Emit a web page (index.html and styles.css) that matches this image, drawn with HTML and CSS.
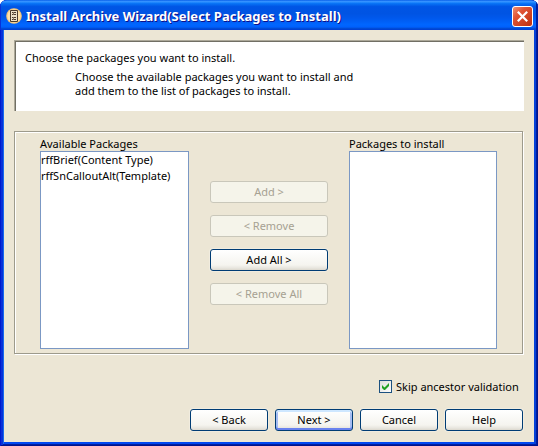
FILE: index.html
```
<!DOCTYPE html>
<html lang="en">
<head>
<meta charset="utf-8">
<title>Install Archive Wizard</title>
<link rel="stylesheet" href="styles.css">
</head>
<body>
<div class="window">
  <header class="titlebar">
    <svg class="app-icon" width="16" height="16" viewBox="0 0 16 16">
      <circle cx="8" cy="8" r="7.8" fill="#f5c67a"/>
      <circle cx="8" cy="8" r="6.6" fill="#ffe2ac"/>
      <path d="M4.5 2.5h7v11h-7z" fill="#efe2c8" stroke="#4d3c2c"/>
      <path d="M6 4.5h4M6 6.5h4M6 9.5h4M6 11.5h4" stroke="#4d3c2c"/>
      <path d="M7.5 4v3M7.5 9v3" stroke="#8c7860"/>
    </svg>
    <h1 class="title">Install Archive Wizard(Select Packages to Install)</h1>
    <button class="close" aria-label="Close">
      <svg width="21" height="21" viewBox="0 0 21 21">
        <defs><linearGradient id="red" x1="0" y1="0" x2="1" y2="1"><stop offset="0" stop-color="#ee9478"/><stop offset=".35" stop-color="#df5334"/><stop offset="1" stop-color="#bd2e0c"/></linearGradient></defs>
        <rect x=".5" y=".5" width="20" height="20" rx="2.5" fill="url(#red)" stroke="#fff"/>
        <path d="M5.8 5.8l9.4 9.4M15.2 5.8l-9.4 9.4" stroke="#fff" stroke-width="2.2"/>
      </svg>
    </button>
  </header>
  <main class="body">
    <section class="banner">
      <p class="lead">Choose the packages you want to install.</p>
      <p class="detail"><span class="d1">Choose the available packages you want to install and</span><br><span class="d2">add them to the list of packages to install.</span></p>
    </section>
    <section class="group">
      <div class="column">
        <div class="label"><span class="l1">Available Packages</span></div>
        <ul class="list">
          <li><span class="i1">rffBrief(Content Type)</span></li>
          <li><span class="i2">rffSnCalloutAlt(Template)</span></li>
        </ul>
      </div>
      <div class="transfer">
        <button class="btn" disabled>Add &gt;</button>
        <button class="btn" disabled>&lt; Remove</button>
        <button class="btn">Add All &gt;</button>
        <button class="btn" disabled>&lt; Remove All</button>
      </div>
      <div class="column">
        <div class="label"><span class="l2">Packages to install</span></div>
        <ul class="list narrow"></ul>
      </div>
    </section>
    <div class="option">
      <svg class="check" width="13" height="13" viewBox="0 0 13 13">
        <defs><linearGradient id="box" x1="0" y1="0" x2="1" y2="1"><stop offset="0" stop-color="#dcdcd7"/><stop offset="1" stop-color="#fff"/></linearGradient></defs>
        <rect x=".5" y=".5" width="12" height="12" fill="url(#box)" stroke="#1c5180"/>
        <path d="M3 5v3l2 2h1l4-4V3L5.500 7.500z" fill="#21a121"/>
      </svg>
      <span class="skip">Skip ancestor validation</span>
    </div>
    <footer class="actions">
      <button class="btn">&lt; Back</button>
      <button class="btn default">Next &gt;</button>
      <button class="btn">Cancel</button>
      <button class="btn">Help</button>
    </footer>
  </main>
</div>
</body>
</html>
```

FILE: styles.css
```
* { box-sizing: border-box; margin: 0; padding: 0; }
body { width: 538px; height: 446px; overflow: hidden; background: #fff; font: 11px/14px "Noto Sans", sans-serif; color: #000; }
.window {
  width: 538px; height: 446px; padding: 0 4px 4px; border-radius: 7px 7px 0 0; overflow: hidden;
  background: #0831d9;
  box-shadow: inset 1px 0 #0019cf, inset -1px 0 #00138c, inset 0 -1px #00138c, inset 3px 0 #0831d9, inset -2px 0 #001ea0, inset 0 -2px #001ea0, inset 4px 0 #166aee, inset -4px 0 #0441d8, inset 0 -4px #0048f1;
}
.titlebar {
  height: 30px; margin: 0 -4px; padding: 2px 5px 0 6px; display: flex; align-items: center;
  background: linear-gradient(to bottom, #0058e6 0, #3a93ff 4%, #288eff 7%, #0872f5 12%, #0055e5 22%, #0054e3 45%, #0058ec 60%, #0066ff 82%, #0060fc 90%, #0047cf 96%, #003dd7 100%);
  box-shadow: inset 1px 0 #0831d9, inset -2px 0 #001ea0;
}
.app-icon { flex: none; }
.title { flex: 1; margin-left: 4px; color: #fff; font: bold 13px/18px "Noto Sans", sans-serif; text-shadow: 1px 1px #0f1089; white-space: nowrap; }
.close { width: 21px; height: 21px; border: 0; background: none; display: block; }
.close svg, .check { display: block; }
.body { height: 412px; padding: 10px 11px 0 10px; background: #ece6d5; }
.banner { width: 510px; height: 71px; padding: 10px 0 0 10px; background: #fff; border-top: 1px solid #aca899; border-left: 1px solid #aca899; box-shadow: inset 1px 1px #716f64; white-space: nowrap; }
.lead { height: 19px; }
.detail { padding-left: 50px; }
.group { width: 509px; height: 223px; margin-top: 20px; padding: 5px 25px 0; display: flex; border: 1px solid #9d9a8c; box-shadow: inset 1px 1px #fff, 1px 1px #fff; }
.label { height: 14px; white-space: nowrap; }
.list { width: 149px; height: 198px; border: 1px solid #7f9db9; border-color: #7b98c4; background: #fff; list-style: none; }
.list.narrow { width: 148px; }
.list li { height: 16px; line-height: 16px; white-space: nowrap; }
.transfer { width: 118px; margin: 44px 21px 0; display: flex; flex-direction: column; gap: 12px; }
.btn {
  height: 22px; border: 1px solid #003c74; border-radius: 3px; font: 11px/18px "Noto Sans", sans-serif; color: #000;
  background: linear-gradient(to bottom, #fff 0, #f5f4ef 75%, #e8e6df 90%, #dcd8ce 100%);
  box-shadow: 0 0 0 1px rgba(255,255,255,.25);
}
.btn:disabled { color: #a6a192; border-color: #c9c7ba; background: #f5f4ea; box-shadow: none; }
.btn.default { box-shadow: inset 0 2px #cee7ff, inset 0 -2px #6982ee, inset 2px 0 #a5bcf2, inset -2px 0 #a5bcf2; }
.option { height: 13px; margin-top: 26px; padding-left: 365px; display: flex; gap: 4px; align-items: center; white-space: nowrap; }
.actions { margin-top: 16px; padding-left: 176px; display: flex; gap: 7px; }
.actions .btn { width: 78px; }
```
